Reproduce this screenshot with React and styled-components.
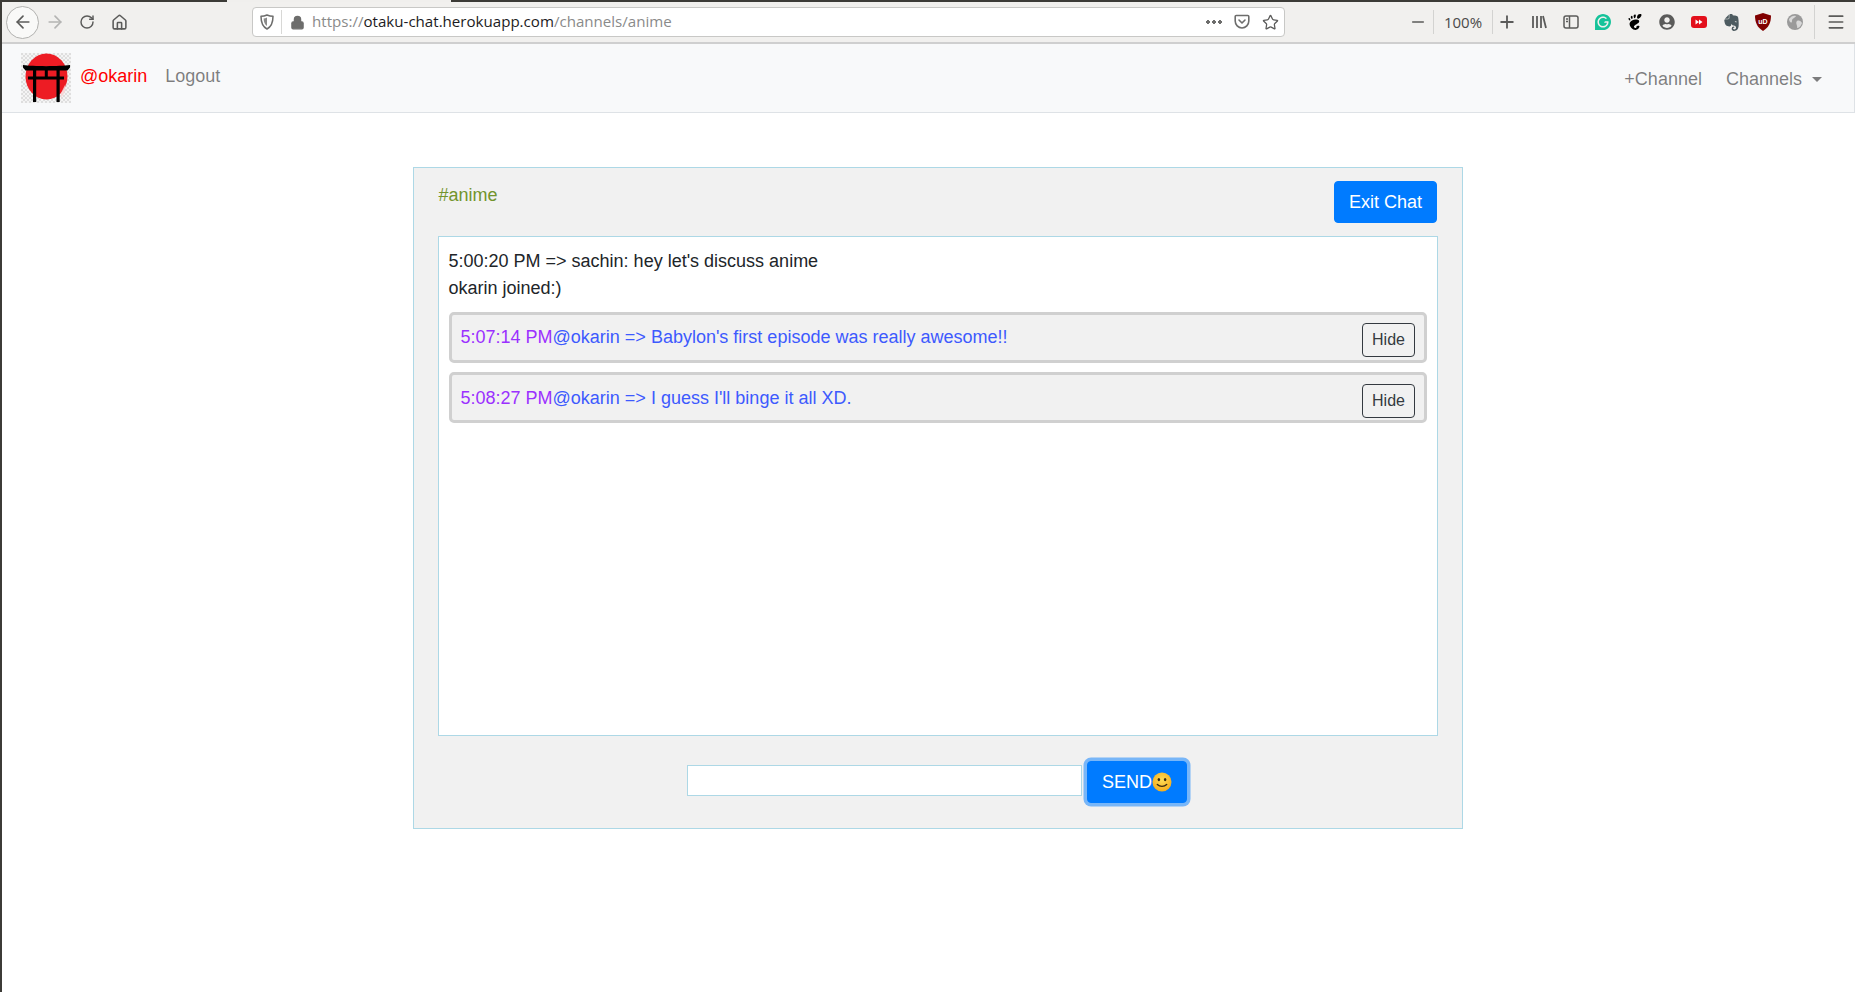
import React from 'react';
import styled, { createGlobalStyle } from 'styled-components';
import { ArrowLeft, ArrowRight, RotateCw, Home, Lock, Star, Minus, Plus, Menu } from 'lucide-react';
import { SiGrammarly, SiGnome, SiEvernote } from 'react-icons/si';
import { FaUserCircle } from 'react-icons/fa';

const GlobalStyle = createGlobalStyle`
  html, body {
    margin: 0;
    padding: 0;
    background: #fff;
    overflow: hidden;
  }
  body {
    font-family: 'Liberation Sans', Arial, sans-serif;
    font-size: 18px;
    line-height: 1.5;
    color: #212529;
  }
`;

const Page = styled.div`
  height: 992px;
  border-left: 2px solid #3c3b37;
  box-sizing: border-box;
`;

const TabStrip = styled.div`
  height: 2px;
  margin-left: -2px;
  background: linear-gradient(to right, #3c3b37 227px, #f0efed 227px, #f0efed 451px, #3c3b37 451px);
`;

const Toolbar = styled.div`
  height: 40px;
  display: flex;
  align-items: center;
  background: #f1f0ee;
  border-bottom: 2px solid #cfcfcf;
  color: #5b5b5a;
`;

const BackButton = styled.div`
  width: 31px;
  height: 31px;
  margin-left: 4px;
  border: 1px solid #b2b2b0;
  border-radius: 50%;
  background: #f9f9f8;
  display: flex;
  align-items: center;
  justify-content: center;
`;

const ToolIcon = styled.div`
  width: ${({ $narrow }) => ($narrow ? '28px' : '32px')};
  height: 28px;
  flex: none;
  display: flex;
  align-items: center;
  justify-content: center;
  color: ${({ $muted }) => ($muted ? '#b4b4b3' : 'inherit')};
`;

const MenuIcon = styled(ToolIcon)`
  margin-left: 5px;
`;

const NavIcons = styled.div`
  display: flex;
  margin-right: 117px;
`;

const UrlBar = styled.div`
  width: 1033px;
  height: 30px;
  flex: none;
  display: flex;
  align-items: center;
  background: #fff;
  border: 1px solid #c8c8c6;
  border-radius: 4px;
  box-sizing: border-box;
`;

const UrlSlot = styled.div`
  width: ${({ $wide }) => ($wide ? '30px' : '28px')};
  height: 100%;
  flex: none;
  display: flex;
  align-items: center;
  justify-content: center;
  color: #6d6d6c;
`;

const UrlDivider = styled.div`
  width: 1px;
  height: 24px;
  background: #d8d8d6;
`;

const UrlText = styled.div`
  flex: 1;
  font-family: 'Open Sans', sans-serif;
  font-size: 15.1px;
  line-height: 1;
  color: #8a8a8a;
  white-space: nowrap;
`;

const UrlHost = styled.span`
  color: #1c1b22;
`;

const Dots = styled.div`
  width: 16px;
  height: 4px;
  margin-right: 6px;
  background: radial-gradient(circle at 2px 2px, #6d6d6c 1.8px, transparent 2px) 0 0 / 6px 4px repeat-x;
`;

const ZoomGroup = styled.div`
  display: flex;
  align-items: center;
  margin-left: 119px;
`;

const ZoomValue = styled.div`
  width: 60px;
  height: 24px;
  margin: 0 0 0 1px;
  border-left: 1px solid #d3d3d1;
  border-right: 1px solid #d3d3d1;
  box-sizing: border-box;
  font-family: 'Open Sans', sans-serif;
  font-size: 15px;
  line-height: 24px;
  text-align: center;
  color: #4a4a49;
`;

const ZoomButton = styled.div`
  width: 28px;
  display: flex;
  justify-content: center;
`;

const ExtensionIcons = styled.div`
  display: flex;
  margin-left: 2px;
`;

const ToolbarDivider = styled.div`
  width: 1px;
  height: 34px;
  margin-left: 3px;
  background: #d3d3d1;
`;

const Navbar = styled.nav`
  height: 69px;
  display: flex;
  align-items: center;
  justify-content: space-between;
  background: #f8f9fa;
  border-bottom: 1px solid #dee2e6;
  border-right: 1px solid #dee2e6;
  box-sizing: border-box;
  padding: 0 32px 0 19px;
`;

const NavGroup = styled.div`
  display: flex;
  align-items: center;
`;

const UserName = styled.span`
  color: #ff0000;
  margin: 0 18px 4px 9px;
`;

const NavLink = styled.a`
  color: rgba(0, 0, 0, 0.5);
  margin: ${({ $left }) => ($left ? '0 0 4px 0' : '2px 0 0 24px')};
  display: flex;
  align-items: center;
`;

const Caret = styled.span`
  width: 0;
  height: 0;
  margin-left: 10px;
  border-top: 5px solid rgba(0, 0, 0, 0.5);
  border-left: 5px solid transparent;
  border-right: 5px solid transparent;
`;

const Card = styled.section`
  width: 1050px;
  height: 662px;
  margin: 54px 0 0 411px;
  padding: 13px 24px 0;
  box-sizing: border-box;
  background: #f1f1f1;
  border: 1px solid #add8e6;
`;

const CardHeader = styled.div`
  display: flex;
  justify-content: space-between;
  align-items: flex-start;
  margin-bottom: 13px;
  padding-right: 1px;
`;

const ChannelName = styled.div`
  color: #72942c;
  margin: 1px 0 0 0.5px;
`;

const PrimaryButton = styled.button`
  height: 42px;
  padding: 0 14px;
  font: inherit;
  color: #fff;
  background: #007bff;
  border: 1px solid #007bff;
  border-radius: 4px;
  box-shadow: ${({ $focused }) => ($focused ? '0 0 0 3.5px rgba(0, 123, 255, 0.5)' : 'none')};
  display: flex;
  align-items: center;
`;

const ChatBox = styled.div`
  height: 500px;
  padding: 11px 10px;
  box-sizing: border-box;
  background: #fff;
  border: 1px solid #add8e6;
`;

const PlainLine = styled.div`
  color: #212529;
  margin-left: -0.5px;
`;

const Message = styled.div`
  height: 51px;
  margin-top: ${({ $first }) => ($first ? '10px' : '9px')};
  padding: ${({ $first }) => ($first ? '8px' : '9px')} 9px 0 8px;
  box-sizing: border-box;
  display: flex;
  justify-content: space-between;
  align-items: flex-start;
  background: #f1f1f1;
  border: 3px solid #d0d0d0;
  border-radius: 5px;
`;

const MessageText = styled.div`
  color: #3d5afe;
  margin: 1px 0 0 0.5px;
`;

const Time = styled.span`
  color: #9b30ff;
`;

const HideButton = styled.button`
  width: 53px;
  height: 34px;
  padding: 0;
  font-family: inherit;
  font-size: 16px;
  color: #343a40;
  background: transparent;
  border: 1px solid #343a40;
  border-radius: 4px;
`;

const SendRow = styled.form`
  display: flex;
  justify-content: center;
  align-items: center;
  gap: 5px;
  margin-top: 25px;
  padding-right: 2px;
`;

const MessageInput = styled.input`
  width: 395px;
  height: 31px;
  margin-bottom: 3px;
  box-sizing: border-box;
  background: #fff;
  border: 1px solid #add8e6;
  outline: none;
`;

const Smiley = () => (
  <svg width="20" height="20" viewBox="0 0 21 21">
    <defs>
      <radialGradient id="smile" cx="50%" cy="40%" r="60%">
        <stop offset="0%" stopColor="#fedc56" />
        <stop offset="100%" stopColor="#f6ad1c" />
      </radialGradient>
    </defs>
    <circle cx="10.5" cy="10.5" r="10" fill="url(#smile)" />
    <ellipse cx="7.2" cy="8" rx="1.3" ry="1.6" fill="#3b2a10" />
    <ellipse cx="13.8" cy="8" rx="1.3" ry="1.6" fill="#3b2a10" />
    <path d="M5.6 13.2c2.6 2.5 7.2 2.5 9.8 0" fill="none" stroke="#3b2a10" strokeWidth="1.5" strokeLinecap="round" />
  </svg>
);

const ToriiLogo = () => (
  <svg width="50" height="50" viewBox="0 0 50 50">
    <defs>
      <pattern id="checks" width="4" height="4" patternUnits="userSpaceOnUse">
        <rect width="4" height="4" fill="#f4f4f4" />
        <rect width="2" height="2" fill="#dedede" />
        <rect x="2" y="2" width="2" height="2" fill="#dedede" />
      </pattern>
    </defs>
    <rect width="50" height="50" fill="url(#checks)" />
    <ellipse cx="25.5" cy="23.5" rx="21" ry="23" fill="#ed1c24" />
    <path d="M2 12c10 1.500 36 1.500 47 0v2.500l-2.500 3h-42L2 14.500z" fill="#000" />
    <rect x="7" y="23.500" width="36" height="3" fill="#000" />
    <rect x="12" y="16" width="3.200" height="33" fill="#000" />
    <rect x="35.500" y="16" width="3.200" height="33" fill="#000" />
    <rect x="23.800" y="17" width="3" height="7" fill="#000" />
    <path d="M40 40l4.500-9-.5 8-4 6z" fill="#f8d5d5" opacity="0.85" />
  </svg>
);

const PocketIcon = () => (
  <svg width="16" height="16" viewBox="0 0 16 16" fill="none" stroke="#6d6d6c" strokeWidth="1.6">
    <path d="M2.2 1.500h11.600c.6 0 1 .4 1 1V7c0 3.800-3 7-6.800 7S1.200 10.800 1.200 7V2.500c0-.6.4-1 1-1z" />
    <path d="M5 6l3 3 3-3" strokeLinecap="round" strokeLinejoin="round" />
  </svg>
);

const ShieldIcon = () => (
  <svg width="14" height="16" viewBox="0 0 14 16" fill="none">
    <path d="M7 1c2 .9 4 1.300 6 1.300 0 6-1.600 10.500-6 12.700C2.600 12.800 1 8.300 1 2.300 3 2.300 5 1.900 7 1z" stroke="#6d6d6c" strokeWidth="1.500" strokeLinejoin="round" />
    <path d="M7 3.500v8.500C4.800 10.500 3.700 8 3.600 4.500 4.800 4.400 5.900 4 7 3.500z" fill="#8a8a89" />
  </svg>
);

const LibraryIcon = () => (
  <svg width="16" height="16" viewBox="0 0 16 16" stroke="#5b5b5a" strokeWidth="1.800" fill="none">
    <path d="M2 2v12M6 2v12M10 2v12M12 2l3 12" />
  </svg>
);

const SidebarIcon = () => (
  <svg width="16" height="16" viewBox="0 0 16 16" fill="none" stroke="#5b5b5a" strokeWidth="1.500">
    <rect x="1" y="2" width="14" height="12" rx="2" />
    <path d="M6.500 2v12M3 5h2M3 7.500h2" />
  </svg>
);

const YoutubeIcon = () => (
  <svg width="16" height="12" viewBox="0 0 16 12">
    <rect width="16" height="12" rx="3" fill="#e3101c" />
    <path d="M4.500 3.500l3.500 2.500-3.500 2.500zM8 3.500l3.500 2.500-3.500 2.500z" fill="#fff" />
  </svg>
);

const UblockIcon = () => (
  <svg width="16" height="18" viewBox="0 0 16 18">
    <path d="M8 0l8 2.500c0 7-2.200 12-8 15.500C2.200 14.500 0 9.500 0 2.500z" fill="#800000" />
    <text x="8" y="11" textAnchor="middle" fontSize="7" fontFamily="Liberation Sans" fontWeight="700" fill="#fff">uD</text>
  </svg>
);

const GlobeIcon = () => (
  <svg width="16" height="16" viewBox="0 0 16 16">
    <circle cx="8" cy="8" r="8" fill="#9a9a9a" />
    <path d="M2 5c2-3 5-4 7-3-1 2-4 2-4 5S2 8 2 5zM10 7c2-1 4 0 5 2-1 3-3 5-5 5 1-2-2-5 0-7z" fill="#d8d8d8" />
  </svg>
);

const BrowserChrome = () => (
  <>
    <TabStrip />
    <Toolbar>
      <BackButton>
        <ArrowLeft size={20} strokeWidth={2} />
      </BackButton>
      <NavIcons>
        <ToolIcon $muted>
          <ArrowRight size={20} strokeWidth={2} />
        </ToolIcon>
        <ToolIcon>
          <RotateCw size={16} strokeWidth={2.2} />
        </ToolIcon>
        <ToolIcon>
          <Home size={17} strokeWidth={2.2} />
        </ToolIcon>
      </NavIcons>
      <UrlBar>
        <UrlSlot>
          <ShieldIcon />
        </UrlSlot>
        <UrlDivider />
        <UrlSlot $wide>
          <Lock size={15} fill="#6d6d6c" />
        </UrlSlot>
        <UrlText>
          https://<UrlHost>otaku-chat.herokuapp.com</UrlHost>/channels/anime
        </UrlText>
        <Dots />
        <ToolIcon $narrow>
          <PocketIcon />
        </ToolIcon>
        <ToolIcon $narrow>
          <Star size={17} strokeWidth={1.800} />
        </ToolIcon>
      </UrlBar>
      <ZoomGroup>
        <ZoomButton>
          <Minus size={18} strokeWidth={2.200} />
        </ZoomButton>
        <ZoomValue>100%</ZoomValue>
        <ZoomButton>
          <Plus size={20} strokeWidth={2.200} />
        </ZoomButton>
      </ZoomGroup>
      <ExtensionIcons>
        <ToolIcon>
          <LibraryIcon />
        </ToolIcon>
        <ToolIcon>
          <SidebarIcon />
        </ToolIcon>
        <ToolIcon>
          <SiGrammarly size={16} color="#15c39a" />
        </ToolIcon>
        <ToolIcon>
          <SiGnome size={16} color="#000" />
        </ToolIcon>
        <ToolIcon>
          <FaUserCircle size={16} color="#5b5b5a" />
        </ToolIcon>
        <ToolIcon>
          <YoutubeIcon />
        </ToolIcon>
        <ToolIcon>
          <SiEvernote size={17} color="#4d5b60" />
        </ToolIcon>
        <ToolIcon>
          <UblockIcon />
        </ToolIcon>
        <ToolIcon>
          <GlobeIcon />
        </ToolIcon>
      </ExtensionIcons>
      <ToolbarDivider />
      <MenuIcon>
        <Menu size={20} strokeWidth={2} />
      </MenuIcon>
    </Toolbar>
  </>
);

const messages = [
  { time: '5:07:14 PM', text: "@okarin => Babylon's first episode was really awesome!!" },
  { time: '5:08:27 PM', text: "@okarin => I guess I'll binge it all XD." },
];

export default function App() {
  return (
    <>
      <GlobalStyle />
      <Page>
        <BrowserChrome />
        <Navbar>
          <NavGroup>
            <ToriiLogo />
            <UserName>@okarin</UserName>
            <NavLink $left>Logout</NavLink>
          </NavGroup>
          <NavGroup>
            <NavLink>+Channel</NavLink>
            <NavLink>
              Channels
              <Caret />
            </NavLink>
          </NavGroup>
        </Navbar>
        <Card>
          <CardHeader>
            <ChannelName>#anime</ChannelName>
            <PrimaryButton>Exit Chat</PrimaryButton>
          </CardHeader>
          <ChatBox>
            <PlainLine>5:00:20 PM =&gt; sachin: hey let's discuss anime</PlainLine>
            <PlainLine>okarin joined:)</PlainLine>
            {messages.map((m, i) => (
              <Message key={m.time} $first={i === 0}>
                <MessageText>
                  <Time>{m.time}</Time>
                  {m.text}
                </MessageText>
                <HideButton type="button">Hide</HideButton>
              </Message>
            ))}
          </ChatBox>
          <SendRow>
            <MessageInput />
            <PrimaryButton $focused type="button">
              SEND
              <Smiley />
            </PrimaryButton>
          </SendRow>
        </Card>
      </Page>
    </>
  );
}
